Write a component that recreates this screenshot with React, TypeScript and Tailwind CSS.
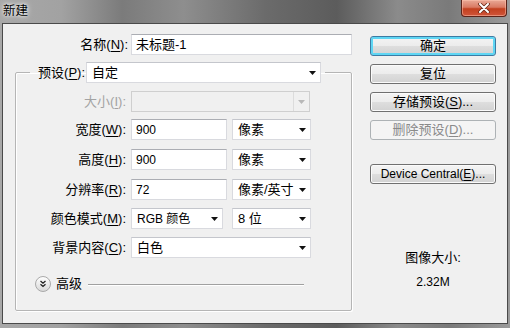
import React from "react";
import clsx from "clsx";

const FONT = "font-['Liberation_Sans','Noto_Sans_CJK_SC',sans-serif]";

function Arrow({ disabled }: { disabled?: boolean }) {
  return (
    <svg width="7" height="4" viewBox="0 0 7 4" className="shrink-0">
      <polygon points="0,0 7,0 3.5,4" fill={disabled ? "#b8b8b8" : "#111"} />
    </svg>
  );
}

function Field({ value, className }: { value: string; className?: string }) {
  return (
    <div
      className={clsx(
        "flex h-[21px] items-center border border-[#d9dadf] border-t-[#abadb3] bg-white pl-[4px] text-black",
        className
      )}
    >
      {value}
    </div>
  );
}

function Select({
  value,
  className,
  disabled,
}: {
  value: React.ReactNode;
  className?: string;
  disabled?: boolean;
}) {
  return (
    <div
      className={clsx(
        "flex h-[21px] items-center overflow-hidden whitespace-nowrap border",
        disabled
          ? "border-[#cfcfcf] bg-[#f0f0f0] text-[#999]"
          : "border-[#d9dadf] border-t-[#c4c6cc] bg-white text-black",
        className
      )}
    >
      <span className="min-w-0 flex-1 pl-[5px]">{value}</span>
      <span
        className={clsx(
          "flex h-full w-[16px] shrink-0 items-center justify-center",
          disabled && "border-l border-[#dcdcdc]"
        )}
      >
        <Arrow disabled={disabled} />
      </span>
    </div>
  );
}

function Label({
  text,
  k,
  disabled,
  className,
}: {
  text: string;
  k: string;
  disabled?: boolean;
  className?: string;
}) {
  return (
    <span
      className={clsx(
        "shrink-0 whitespace-nowrap text-right",
        disabled ? "text-[#a3a3a3]" : "text-black",
        className
      )}
    >
      {text}(<u className="underline-offset-2">{k}</u>):
    </span>
  );
}

function Btn({
  children,
  primary,
  disabled,
  className,
}: {
  children: React.ReactNode;
  primary?: boolean;
  disabled?: boolean;
  className?: string;
}) {
  return (
    <div
      className={clsx(
        "flex h-[20px] w-[126px] items-center justify-center whitespace-nowrap rounded-[3px] border",
        disabled
          ? "border-[#adb2b5] bg-[#f4f4f4] text-[#8a8a8a]"
          : "bg-[linear-gradient(#f4f4f4_0%,#ececec_50%,#dedede_51%,#d2d2d2_100%)] text-black",
        !disabled && (primary ? "border-[#3d7ba3] shadow-[inset_0_0_0_2px_#5fd6f4]" : "border-[#707070] shadow-[inset_0_0_0_1px_#fbfbfb]"),
        className
      )}
    >
      {children}
    </div>
  );
}

function Row({
  label,
  k,
  children,
  className,
  disabled,
}: {
  label: string;
  k: string;
  children: React.ReactNode;
  className?: string;
  disabled?: boolean;
}) {
  return (
    <div className={clsx("flex items-center", className)}>
      <Label text={label} k={k} disabled={disabled} className="w-[115px] pr-[5px]" />
      {children}
    </div>
  );
}

function MoreIcon() {
  return (
    <svg width="16" height="16" viewBox="0 0 16 16" className="shrink-0">
      <defs>
        <linearGradient id="g" x1="0" y1="0" x2="0" y2="1">
          <stop offset="0" stopColor="#ffffff" />
          <stop offset="1" stopColor="#d8d8d8" />
        </linearGradient>
      </defs>
      <circle cx="8" cy="8" r="7.5" fill="url(#g)" stroke="#a9a9a9" />
      <path d="M5.5 5 L8 7.2 L10.5 5 M5.5 8.2 L8 10.4 L10.5 8.2" fill="none" stroke="#222" strokeWidth="1.3" />
    </svg>
  );
}

export default function App() {
  return (
    <div
      className={clsx(
        "flex h-[328px] w-[510px] flex-col overflow-hidden text-[13px] leading-[16px] bg-[linear-gradient(90deg,#a8a8a8_0%,#a2a2a2_12%,#7b7b7b_24%,#8e8e8e_36%,#6b6b6b_52%,#5c5c5c_66%,#8b8b8b_78%,#7a7a7a_88%,#9b9b9b_100%)]",
        FONT
      )}
    >
      {/* title bar */}
      <div className="flex h-[23px] shrink-0 items-start">
        <span className="ml-[3px] mt-[3px] text-[12.5px] leading-[16px] text-black [text-shadow:0_0_6px_#ffffff,0_0_3px_#ffffff]">
          新建
        </span>
        <div className="ml-auto mr-[3px] flex h-[17px] w-[46px] items-center justify-center rounded-b-[4px] border border-t-0 border-[#5b2319] bg-[linear-gradient(#e9a996_0%,#d97a63_45%,#c2401f_55%,#d0553a_100%)] shadow-[inset_0_0_0_1px_rgba(255,200,180,0.5)]">
          <svg width="12" height="10" viewBox="0 0 12 10">
            <path d="M2 1 L10 9 M10 1 L2 9" stroke="#6a2a1a" strokeWidth="3.6" strokeLinecap="round" />
            <path d="M2 1 L10 9 M10 1 L2 9" stroke="#ffffff" strokeWidth="2" strokeLinecap="round" />
          </svg>
        </div>
      </div>

      {/* dialog body */}
      <div className="mx-[2px] flex h-[301px] shrink-0 border border-[#4a4a4a] bg-[#f0f0f0]">
        {/* left column */}
        <div className="flex w-[349px] flex-col">
          <div className="mt-[10px] flex items-center">
            <Label text="名称" k="N" className="w-[128px] pr-[3px]" />
            <Field value="未标题-1" className="w-[222px]" />
          </div>

          <fieldset className="ml-[12px] mt-[7px] w-[337px] rounded-[2px] border border-[#b5b5b5] pb-[18px] shadow-[inset_1px_1px_0_#ffffff,1px_1px_0_#ffffff]">
            <legend className="ml-[14px] px-[4px]">
              <span className="flex items-center">
                <Label text="预设" k="P" className="w-[52px] pr-[1px]" />
                <Select value="自定" className="w-[235px]" />
              </span>
            </legend>

            <Row label="大小" k="I" disabled className="mt-[8px]">
              <Select value="" disabled className="w-[179px]" />
            </Row>
            <Row label="宽度" k="W" className="mt-[7px]">
              <Field value="900" className="w-[96px] text-[12px]" />
              <Select value="像素" className="ml-[5px] w-[79px]" />
            </Row>
            <Row label="高度" k="H" className="mt-[9px]">
              <Field value="900" className="w-[96px] text-[12px]" />
              <Select value="像素" className="ml-[5px] w-[79px]" />
            </Row>
            <Row label="分辨率" k="R" className="mt-[9px]">
              <Field value="72" className="w-[96px] text-[12px]" />
              <Select value="像素/英寸" className="ml-[5px] w-[79px]" />
            </Row>
            <Row label="颜色模式" k="M" className="mt-[8px]">
              <Select value={<span className="text-[12px]">RGB 颜色</span>} className="w-[92px]" />
              <Select value="8 位" className="ml-[9px] w-[79px]" />
            </Row>
            <Row label="背景内容" k="C" className="mt-[8px]">
              <Select value="白色" className="w-[180px]" />
            </Row>

            <div className="ml-[19px] mt-[18px] flex h-[16px] items-center">
              <MoreIcon />
              <span className="ml-[5px] text-black">高级</span>
              <span className="ml-[6px] h-px w-[216px] bg-[#a0a0a0] shadow-[0_1px_0_#ffffff]" />
            </div>
          </fieldset>
        </div>

        {/* right column */}
        <div className="ml-[18px] flex flex-col items-center">
          <Btn primary className="mt-[12px]">确定</Btn>
          <Btn className="mt-[8px]">复位</Btn>
          <Btn className="mt-[8px]">
            存储预设(<u className="underline-offset-2">S</u>)...
          </Btn>
          <Btn disabled className="mt-[8px]">
            删除预设(<u className="underline-offset-2">D</u>)...
          </Btn>
          <Btn className="mt-[24px] text-[12px]">
            Device Central(<u className="underline-offset-2">E</u>)...
          </Btn>
          <span className="mt-[67px] leading-[14px] text-black">图像大小:</span>
          <span className="mt-[10px] text-[12px] leading-[14px] text-black">2.32M</span>
        </div>
      </div>
    </div>
  );
}
